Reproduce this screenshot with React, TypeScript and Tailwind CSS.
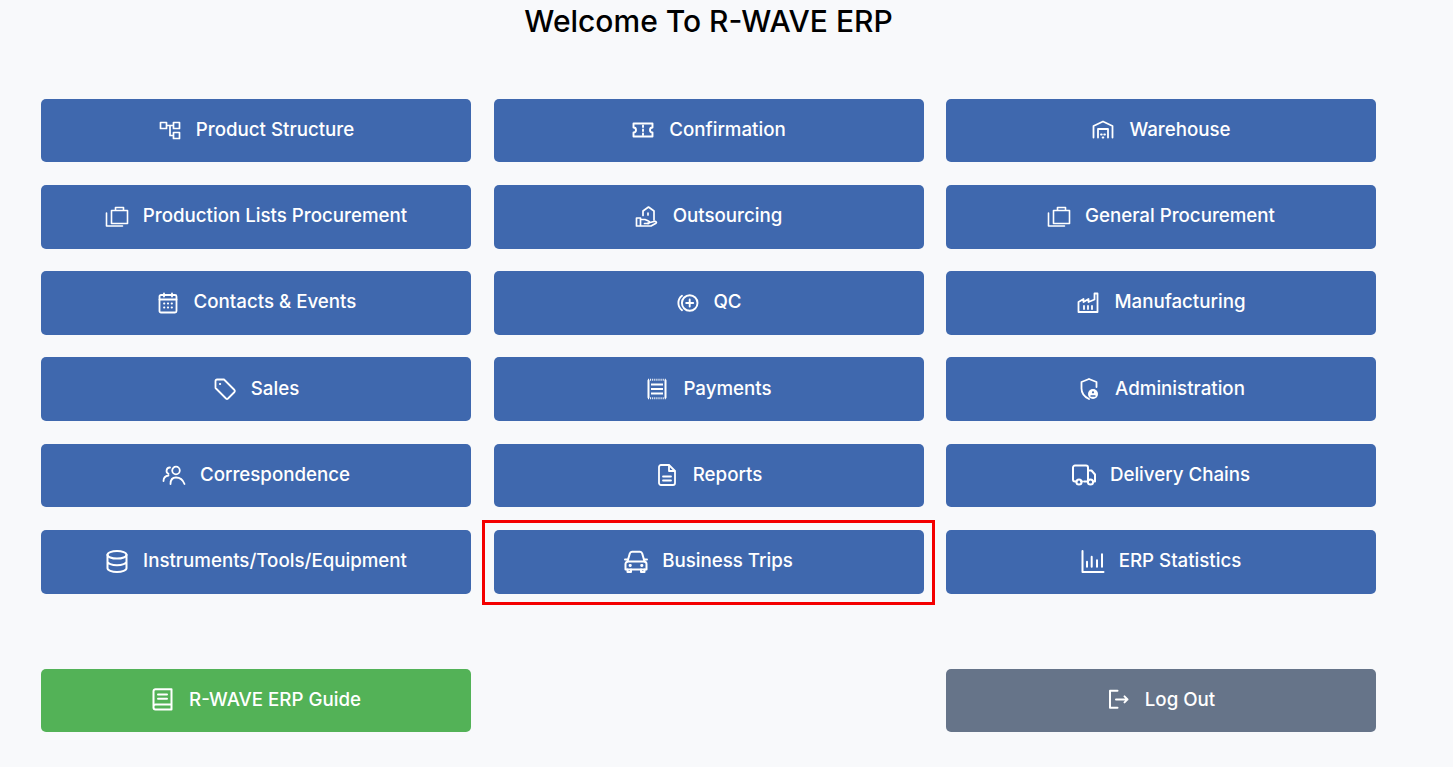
import React from "react";

const Ic = ({ children, w = 1.8 }: { children: React.ReactNode; w?: number }) => (
  <svg viewBox="0 0 24 24" width={24} height={24} fill="none" stroke="white" strokeWidth={w} strokeLinecap="round" strokeLinejoin="round" className="shrink-0">
    {children}
  </svg>
);

const Structure = () => (
  <Ic w={1.7}>
    <path strokeLinecap="butt" d="M2.500 4.500h6v6h-6zM15.500 4.500h6v6h-6zM15.500 14.500h6v6h-6zM8.500 7.500h7M12 7.500v10h3.500" />
  </Ic>
);
const Cases = () => (
  <Ic w={1.6}>
    <path d="M6.500 5.500h16v13h-16zM10.500 5.500V2.500h8v3M1.500 8v13h16" />
  </Ic>
);
const Ticket = () => (
  <Ic w={1.9}>
    <path d="M2.500 5.500h19v4a2.500 2.500 0 0 0 0 5v4h-19v-4a2.500 2.500 0 0 0 0-5z" />
    <path strokeDasharray="1.500 2.500" d="M12 7.500v9.500" />
  </Ic>
);
const HouseHand = () => (
  <Ic w={1.7}>
    <path d="M8 10.500V6l5.500-4 5.500 4v9" />
    <path d="M13 8v2" />
    <path d="M1.500 13h4v8h-4zM5.500 14.500h4.500l3.500 1.500a1.300 1.300 0 0 1-1 2.500H9.500M13 18l6-1.500c2-.5 3 .6 2 1.700L16 21H5.500" />
  </Ic>
);
const QcIcon = () => (
  <Ic w={1.9}>
    <circle cx="14.700" cy="12" r="7.800" />
    <path d="M14.700 8.500v7M11.200 12h7M7 4.800a9 9 0 0 0 0 14.400" />
  </Ic>
);
const Warehouse = () => (
  <Ic w={1.8}>
    <path d="M2.500 19.500V8L12 3.500 21.500 8v11.500M7 19.500V11h10v8.500" />
    <path d="M10 16.500h.8M13.200 16.500h.8M11.600 19.500h.8" />
  </Ic>
);
const Factory = () => (
  <Ic w={1.8}>
    <path d="M2.500 21V11l5-3v3l5-3v3l6-2.500V2.500h3V21z" />
    <path d="M8 15v3M12 15v3M16 15v3" />
  </Ic>
);
const Calendar = () => (
  <Ic w={1.8}>
    <rect x="3.500" y="4" width="17" height="17.500" rx="1.500" />
    <path d="M3.500 8.500h17M8 2.500v3M16 2.500v3" />
    <path d="M8 12.500h.4M11.800 12.500h.4M15.600 12.500h.4M8 16.500h.4M11.800 16.500h.4M15.600 16.500h.4" />
  </Ic>
);
const Tag = () => (
  <Ic w={1.8}>
    <path d="M2.500 4a1.500 1.500 0 0 1 1.500-1.500h7L21.500 13a1.500 1.500 0 0 1 0 2L15 21.500a1.500 1.500 0 0 1-2 0L2.500 11z" />
    <path strokeWidth={2.200} d="M7 7h.1" />
  </Ic>
);
const Receipt = () => (
  <Ic w={2}>
    <path d="M3.500 3.500v17M20.500 3.500v17" />
    <path strokeDasharray="1 1.100" strokeLinecap="butt" d="M3 2.800h18M3 21.200h18" />
    <path strokeLinecap="butt" d="M6 7.500h12M6 12h12M6 16.500h12" />
  </Ic>
);
const FileDoc = () => (
  <Ic w={1.8}>
    <path d="M4 4a2 2 0 0 1 2-2h8l6 6v12a2 2 0 0 1-2 2H6a2 2 0 0 1-2-2z" />
    <path d="M14 2.500V8h5.500M8 13.500h8M8 17.500h8" />
  </Ic>
);
const Shield = () => (
  <Ic w={1.8}>
    <path d="M12 2 4.500 5v6.500c0 5 3.300 8.500 7.500 10.500M12 2l7.500 3v5" />
    <circle cx="16" cy="17" r="5" fill="white" stroke="none" />
    <circle cx="16" cy="15.300" r="1.100" fill="#3f68ae" stroke="none" />
    <path stroke="#3f68ae" strokeWidth={1.300} d="M14 19h4" />
  </Ic>
);
const Users = () => (
  <Ic w={1.8}>
    <circle cx="14" cy="7.500" r="3.800" />
    <path d="M8.500 21c0-4 2-6.500 5.500-6.500s7 2.500 8.500 6.500M8 4.500a3.300 3.300 0 0 0-1.500 6.300M1.500 18c0-3 1.800-5 5-5.500" />
  </Ic>
);
const Truck = () => (
  <Ic w={2}>
    <path d="M4.500 18.500H3a2 2 0 0 1-2-2V4.500a2 2 0 0 1 2-2h11a2 2 0 0 1 2 2v14h-4M16 7.500h3.500l3.500 4v7h-1.500M9 18.500h1" />
    <circle cx="7" cy="19" r="2.600" />
    <circle cx="18.500" cy="19" r="2.600" />
  </Ic>
);
const Db = () => (
  <Ic w={2}>
    <ellipse cx="12" cy="4.800" rx="9.500" ry="3.800" />
    <path d="M2.500 4.800v13.500c0 2 4.300 3.700 9.500 3.700s9.500-1.700 9.500-3.700V4.800M2.500 11.500c0 2 4.300 3.800 9.500 3.800s9.500-1.800 9.500-3.800" />
  </Ic>
);
const Car = () => (
  <Ic w={2}>
    <path d="M1 9.500h2.500M23 9.500h-2.500" />
    <path d="M3.500 11.500 5.800 3.500A2.500 2.500 0 0 1 8 1.800h8a2.500 2.500 0 0 1 2.200 1.700L20.500 11.500" />
    <path d="M1.500 14a2.500 2.500 0 0 1 2.500-2.500h16a2.500 2.500 0 0 1 2.500 2.500v5.500h-21z" />
    <path d="M3.500 19.500v2.500h3.500v-2.500M17 19.500v2.500h3.500v-2.500" />
    <path strokeWidth={2.800} d="M6 15.500h.4M17.600 15.500h.4" />
  </Ic>
);
const Stats = () => (
  <Ic w={2}>
    <path d="M1.500 1v21h21M6 11.800v5M10.700 6.800v10M16 10.200v6.600M21 4.200v12.600" />
  </Ic>
);
const Book = () => (
  <Ic w={2}>
    <path d="M2.500 18V3.200a2 2 0 0 1 2-2h16v20.400h-16a2 2 0 0 1-2-2v-1a2 2 0 0 1 2-2h16" />
    <path d="M7 6.400h9M7 10.700h9" />
  </Ic>
);
const LogOut = () => (
  <Ic w={2}>
    <path d="M10.500 2.800H3v17h7.500M9 11.400h11.500M17.500 8.400l3 3-3 3" />
  </Ic>
);

const Btn = ({ icon, label, color = "bg-[#3f68ae]", children }: { icon: React.ReactNode; label: string; color?: string; children?: React.ReactNode }) => (
  <div className={`relative h-[63.8px] rounded-[5px] flex items-center justify-center gap-[14px] text-white text-[18.72px] font-medium ${color}`}>
    {icon}
    <span className="relative top-[-0.5px]">{label}</span>
    {children}
  </div>
);

export default function App() {
  return (
    <div className="min-h-screen bg-[#f8f9fb] pl-[41px] w-full" style={{ fontFamily: "Inter, sans-serif" }}>
      <div className="w-[1335px]">
        <h1 className="pt-[3px] h-[98.6px] text-center text-[30px] leading-[36px] font-medium text-black">Welcome To R-WAVE ERP</h1>
        <div className="grid grid-cols-3 gap-x-[22.5px] gap-y-[22.45px]">
          <Btn icon={<Structure />} label="Product Structure" />
          <Btn icon={<Ticket />} label="Confirmation" />
          <Btn icon={<Warehouse />} label="Warehouse" />
          <Btn icon={<Cases />} label="Production Lists Procurement" />
          <Btn icon={<HouseHand />} label="Outsourcing" />
          <Btn icon={<Cases />} label="General Procurement" />
          <Btn icon={<Calendar />} label="Contacts & Events" />
          <Btn icon={<QcIcon />} label="QC" />
          <Btn icon={<Factory />} label="Manufacturing" />
          <Btn icon={<Tag />} label="Sales" />
          <Btn icon={<Receipt />} label="Payments" />
          <Btn icon={<Shield />} label="Administration" />
          <Btn icon={<Users />} label="Correspondence" />
          <Btn icon={<FileDoc />} label="Reports" />
          <Btn icon={<Truck />} label="Delivery Chains" />
          <Btn icon={<Db />} label="Instruments/Tools/Equipment" />
          <Btn icon={<Car />} label="Business Trips">
            <div className="absolute left-[-12px] right-[-11px] top-[-10px] bottom-[-11px] border-[3px] border-[#f40000]" />
          </Btn>
          <Btn icon={<Stats />} label="ERP Statistics" />
        </div>
        <div className="grid grid-cols-3 gap-x-[22.5px] mt-[75px]">
          <Btn icon={<Book />} label="R-WAVE ERP Guide" color="bg-[#53b257]" />
          <div />
          <Btn icon={<LogOut />} label="Log Out" color="bg-[#667489]" />
        </div>
      </div>
    </div>
  );
}
